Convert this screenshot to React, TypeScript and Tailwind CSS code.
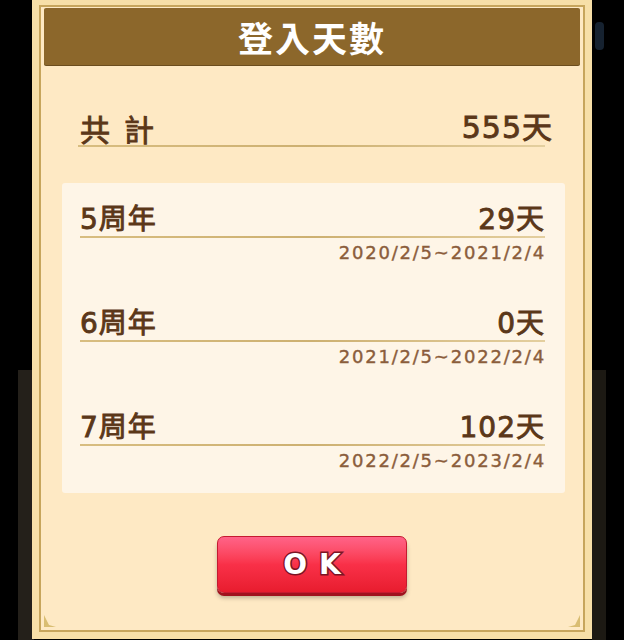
import React from 'react';

const rows = [
  { label: '5周年', days: '29天', range: '2020/2/5~2021/2/4' },
  { label: '6周年', days: '0天', range: '2021/2/5~2022/2/4' },
  { label: '7周年', days: '102天', range: '2022/2/5~2023/2/4' },
];

const font = "font-['DejaVu_Sans','Noto_Sans_CJK_TC','Noto_Sans_CJK_SC',sans-serif]";

const Underline: React.FC<{ className?: string }> = ({ className = '' }) => (
  <div className={`h-[2px] bg-gradient-to-r from-[#d8bd80] via-[#cdb071] to-[#e4cf9f] ${className}`} />
);

const Corner: React.FC<{ flip?: boolean }> = ({ flip }) => (
  <svg width="14" height="14" viewBox="0 0 14 14" className={flip ? '-scale-x-100' : ''}>
    <path d="M1 1 L1 13 L13 13 L6 11 Z" fill="#d9bd72" />
  </svg>
);

const App: React.FC = () => {
  return (
    <div className={`relative w-[624px] h-[640px] bg-black overflow-hidden ${font}`}>
      {/* background scenery peeking out */}
      <div className="absolute left-[18px] top-[370px] w-[16px] h-[270px] bg-[#24201a]" />
      <div className="absolute left-[592px] top-[370px] w-[14px] h-[270px] bg-[#1c1913]" />
      <div className="absolute left-[595px] top-[22px] w-[9px] h-[28px] bg-[#162230] rounded-sm" />

      <div className="absolute left-[32px] top-[-2px] w-[560px] h-[641px] bg-[#f7dfa8] p-[7px]">
        <div className="relative h-full border-2 border-[#c7a55c] bg-[#fee9c4] flex flex-col">
          <div className="mx-[3px] mt-[1px] h-[57px] bg-[#8c672b] rounded-[2px] flex items-center justify-center shadow-[0_1px_0_#6b4d1e]">
            <span className="font-['Noto_Sans_CJK_TC',sans-serif] text-white text-[35px] font-bold leading-none tracking-[2px]">登入天數</span>
          </div>

          {/* total */}
          <div className="mt-[46px] pt-[4px] pl-[39px] pr-[30px] h-[30px] flex items-center justify-between text-[#5b3719] text-[30px] leading-none [-webkit-text-stroke:0.9px_#5b3719]">
            <span className="tracking-[14px] font-['Noto_Sans_CJK_TC',sans-serif]">共計</span>
            <span className="tracking-[1px]">555天</span>
          </div>
          <Underline className="mt-[4px] ml-[37px] mr-[38px]" />

          {/* yearly breakdown */}
          <div className="mt-[36px] ml-[21px] mr-[18px] bg-[#fef5e7] rounded-[3px] pt-[20px] pb-[20px] px-[18px] flex flex-col gap-[42px]">
            {rows.map((r) => (
              <div key={r.label} className="flex flex-col">
                <div className="h-[30px] pt-[4px] flex items-center justify-between pr-[2px] text-[#5b3719] text-[28px] leading-none [-webkit-text-stroke:0.9px_#5b3719]">
                  <span className="tracking-[1px]">{r.label}</span>
                  <span className="tracking-[1px]">{r.days}</span>
                </div>
                <Underline className="mt-[3px] mr-[2px]" />
                <div className="mt-[3px] h-[24px] pr-[1px] flex items-center justify-end text-[#8b5d3b] text-[18px] leading-none tracking-[1.8px] [-webkit-text-stroke:0.4px_#8b5d3b]">
                  {r.range}
                </div>
              </div>
            ))}
          </div>

          {/* button */}
          <div className="mt-[43px] flex justify-center">
            <button className="w-[190px] h-[57px] rounded-[7px] border border-[#c51a30] bg-gradient-to-b from-[#ff6388] via-[#f93048] to-[#e81c2e] shadow-[0_3px_0_#a0121e,0_5px_4px_rgba(0,0,0,0.25)] flex items-center justify-center">
              <span className="text-white text-[28px] font-bold leading-none tracking-[12px] pl-[12px] [-webkit-text-stroke:3px_#7c1424] [paint-order:stroke_fill]">
                OK
              </span>
            </button>
          </div>

          <div className="absolute left-[2px] bottom-[2px]">
            <Corner />
          </div>
          <div className="absolute right-[2px] bottom-[2px]">
            <Corner flip />
          </div>
        </div>
      </div>
    </div>
  );
};

export default App;
